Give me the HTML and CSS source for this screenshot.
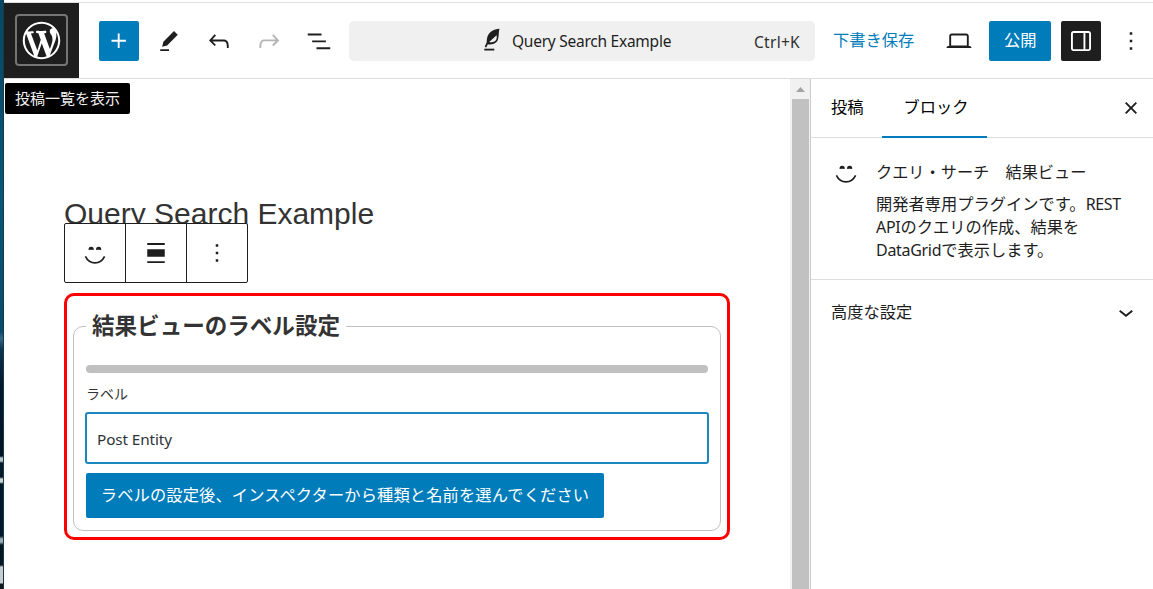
FILE: index.html
```html
<!DOCTYPE html>
<html lang="ja">
<head>
<meta charset="utf-8">
<title>Query Search Example</title>
<link rel="stylesheet" href="styles.css">
</head>
<body>
<div class="desktop"></div>
<div class="editor">
  <header class="header">
    <div class="site-hub">
      <div class="site-hub-frame"><svg class="wp-logo" viewBox="-2 -2 24 24"><path d="M20 10c0-5.51-4.49-10-10-10C4.48 0 0 4.49 0 10c0 5.52 4.48 10 10 10 5.51 0 10-4.48 10-10zM7.78 15.37L4.37 6.22c.55-.02 1.17-.08 1.17-.08.5-.06.44-1.13-.06-1.11 0 0-1.45.11-2.37.11-.18 0-.37 0-.58-.01C4.12 2.69 6.87 1.11 10 1.11c2.33 0 4.45.87 6.05 2.34-.68-.11-1.65.39-1.65 1.58 0 .74.45 1.36.9 2.1.35.61.55 1.36.55 2.46 0 1.49-1.4 5-1.4 5l-3.03-8.37c.54-.02.82-.17.82-.17.5-.05.44-1.25-.06-1.22 0 0-1.44.12-2.38.12-.87 0-2.33-.12-2.33-.12-.5-.03-.56 1.2-.06 1.22l.92.08 1.26 3.41zM17.41 10c.24-.64.74-1.87.43-4.25.7 1.29 1.05 2.71 1.05 4.25 0 3.29-1.73 6.24-4.4 7.78.97-2.59 1.94-5.2 2.92-7.78zM6.1 18.09C3.12 16.65 1.11 13.53 1.11 10c0-1.3.23-2.48.72-3.59C3.25 10.3 4.67 14.2 6.1 18.09zm4.03-6.63l2.58 6.98c-.86.29-1.76.45-2.71.45-.79 0-1.57-.11-2.29-.33.81-2.38 1.62-4.74 2.42-7.1z"/></svg></div>
      <div class="tooltip">投稿一覧を表示</div>
    </div>
    <div class="tools">
      <button class="tool tool-primary"><svg class="icon" viewBox="0 0 24 24"><path d="M11 12.5V17.5H12.5V12.5H17.5V11H12.5V6H11V11H6V12.5H11Z"/></svg></button>
      <button class="tool"><svg class="icon" viewBox="0 0 24 24"><path d="m19 7-3-3-8.5 8.5-1 4 4-1L19 7Zm-7 11.5H5V20h7v-1.5Z"/></svg></button>
      <button class="tool"><svg class="icon" viewBox="0 0 24 24"><path d="M18.3 11.7c-.6-.6-1.4-.9-2.3-.9H6.7l2.9-3.3-1.1-1-4.5 5L8.5 16l1-1-2.7-2.7H16c.5 0 .9.2 1.3.5 1 1 1 3.4 1 4.5v.3h1.5v-.2c0-1.5 0-4.3-1.5-5.7z"/></svg></button>
      <button class="tool tool-disabled"><svg class="icon" viewBox="0 0 24 24"><path d="M15.6 6.5l-1.1 1 2.9 3.3H8c-.9 0-1.7.3-2.3.9-1.4 1.5-1.4 4.2-1.4 5.6v.2h1.5v-.3c0-1.1 0-3.5 1-4.5.3-.3.7-.5 1.3-.5h9.2L14.5 15l1.1 1.1 4.6-4.6-4.6-5z"/></svg></button>
      <button class="tool"><svg class="icon" viewBox="0 0 24 24"><path d="M3 6h11v1.5H3V6Zm3.5 5.5h11V13h-11v-1.5ZM21 17H10v1.5h11V17Z"/></svg></button>
    </div>
    <div class="command-bar">
      <svg class="feather" viewBox="0 0 16 24"><path d="M15.5.8C9.500 1 4.500 4.500 3.200 9.500 2.700 11.500 2.900 13.200 2.600 14.500L.7 18.800l1.500.7 1.700-3.300C7 16.800 11 16 13 13.500 15.300 10.500 14.200 5.500 15.500.8ZM5.200 14 12.600 7.200C13 9.500 12.700 11.400 11.400 12.700 10 14 7.400 14.500 5.200 14Z"/><path d="M.3 20.700h10v1.800H.3z"/></svg>
      <span class="command-title">Query Search Example</span>
      <span class="command-key">Ctrl+K</span>
    </div>
    <div class="actions">
      <span class="save-draft">下書き保存</span>
      <button class="tool preview"><svg class="icon" viewBox="0 0 24 24"><path d="M20.500 16h-.7V8c0-1.100-.9-2-2-2H6.200c-1.100 0-2 .9-2 2v8h-.7c-.8 0-1.500.7-1.500 1.500h20c0-.8-.7-1.500-1.500-1.500zM5.700 8c0-.3.2-.5.5-.5h11.600c.3 0 .5.2.5.5v7.600H5.700V8z"/></svg></button>
      <button class="publish">公開</button>
      <button class="tool tool-dark"><svg class="icon" viewBox="0 0 24 24"><path d="M18 4H6c-1.100 0-2 .9-2 2v12c0 1.100.9 2 2 2h12c1.100 0 2-.9 2-2V6c0-1.100-.9-2-2-2zm-4 14.500H6c-.3 0-.5-.2-.5-.5V6c0-.3.2-.5.5-.5h8v13zm4.500-.5c0 .3-.2.5-.5.5h-2.500v-13H18c.3 0 .5.2.5.5v12z"/></svg></button>
      <button class="tool"><svg class="icon" viewBox="0 0 24 24"><path d="M13 19h-2v-2h2v2zm0-6h-2v-2h2v2zm0-6h-2V5h2v2z"/></svg></button>
    </div>
  </header>
  <div class="body">
    <main class="canvas">
      <h1 class="post-title">Query Search Example</h1>
      <div class="block-toolbar">
        <button class="block-tool"><svg class="smiley" viewBox="0 0 22 20"><path d="M4.600 6C4.300 3.900 5.400 2.700 7.200 2.700S10 3.900 9.700 6Q7.200 5.500 4.600 6ZM12.100 6C11.800 3.900 12.900 2.700 14.700 2.700S17.500 3.900 17.200 6Q14.700 5.500 12.100 6Z"/><path class="smile" d="M1.400 12.400C3.500 16.800 7 18.900 11 18.900s7.500-2.100 9.600-6.500"/></svg></button>
        <button class="block-tool"><svg class="icon" viewBox="0 0 24 24"><path d="M19 5.500H5V4h14v1.500ZM19 20H5v-1.500h14V20ZM5 9h14v6H5V9Z"/></svg></button>
        <button class="block-tool"><svg class="icon" viewBox="0 0 24 24"><path d="M13 19h-2v-2h2v2zm0-6h-2v-2h2v2zm0-6h-2V5h2v2z"/></svg></button>
      </div>
      <section class="block">
        <fieldset class="settings">
          <legend class="settings-title"><span class="settings-title-text">結果ビューのラベル設定</span></legend>
          <div class="divider"></div>
          <label class="field-label" for="entity">ラベル</label>
          <input class="field-input" id="entity" type="text" value="Post Entity">
          <button class="hint">ラベルの設定後、インスペクターから種類と名前を選んでください</button>
        </fieldset>
      </section>
    </main>
    <div class="scrollbar"><svg class="scroll-arrow" viewBox="0 0 9 5"><path d="M0 5 4.500 0 9 5Z"/></svg><div class="scroll-thumb"></div></div>
    <aside class="sidebar">
      <nav class="tabs">
        <span class="tab">投稿</span>
        <span class="tab tab-active">ブロック</span>
        <svg class="icon close" viewBox="0 0 24 24"><path d="M12 13.060l3.712 3.713 1.061-1.060L13.061 12l3.712-3.712-1.060-1.060L12 10.938 8.288 7.227l-1.061 1.060L10.939 12l-3.712 3.712 1.060 1.061L12 13.061z"/></svg>
      </nav>
      <div class="card">
        <svg class="smiley" viewBox="0 0 22 20"><path d="M4.600 6C4.300 3.900 5.400 2.700 7.200 2.700S10 3.900 9.700 6Q7.200 5.500 4.600 6ZM12.100 6C11.800 3.900 12.900 2.700 14.700 2.700S17.500 3.900 17.200 6Q14.700 5.500 12.100 6Z"/><path class="smile" d="M1.400 12.400C3.500 16.800 7 18.900 11 18.900s7.500-2.100 9.600-6.500"/></svg>
        <div class="card-text">
          <h2 class="card-title">クエリ・サーチ　結果ビュー</h2>
          <p class="card-desc">開発者専用プラグインです。<span class="latin">REST</span><br><span class="latin">API</span>のクエリの作成、結果を<br><span class="latin">DataGrid</span>で表示します。</p>
        </div>
      </div>
      <div class="panel">
        <span class="panel-title">高度な設定</span>
        <svg class="icon panel-chevron" viewBox="0 0 24 24"><path d="M17.500 11.600L12 16l-5.500-4.400.9-1.200L12 14l4.500-3.600 1 1.200z"/></svg>
      </div>
    </aside>
  </div>
</div>
</body>
</html>
```

FILE: styles.css
```css
* { box-sizing: border-box; }

body {
  margin: 0;
  width: 1153px;
  height: 589px;
  display: flex;
  overflow: hidden;
  background: #fff;
  color: #1e1e1e;
  font: 16.25px/22px "Noto Sans CJK JP", sans-serif;
}

button {
  margin: 0;
  padding: 0;
  border: 0;
  background: none;
  color: inherit;
  font: inherit;
}

svg { display: block; fill: currentColor; flex: none; }

.icon { width: 30px; height: 30px; }

.desktop {
  flex: none;
  width: 4px;
  border-right: 1px solid #173a4a;
  background: linear-gradient(#074763 0, #07567a 200px, #084b6b 332px, #336783 338px, #0b3350 350px, #04182c 385px, #031225 456px, #b8c4ca 458px 461px, #061a2c 463px 477px, #c9d4d8 479px 482px, #04162a 484px 536px, #9eacb8 539px 542px, #071422 545px 565px, #c9cccf 567px 583px, #14181b 584px);
}

.editor {
  flex: 1;
  min-width: 0;
  display: flex;
  flex-direction: column;
  padding-top: 2px;
}

/* Header */
.header {
  flex: none;
  height: 77px;
  display: flex;
  align-items: center;
  border-top: 1px solid #ddd;
  border-bottom: 1px solid #ddd;
}

.site-hub {
  position: relative;
  width: 75px;
  height: 75px;
  padding: 11px;
  background: #1e1e1e;
}

.site-hub-frame {
  width: 53px;
  height: 52px;
  display: flex;
  align-items: center;
  justify-content: center;
  border: 2px solid #757575;
  border-radius: 4px;
  color: #fff;
}

.wp-logo { width: 45px; height: 45px; }

.tooltip {
  position: absolute;
  z-index: 2;
  left: 1px;
  top: 80px;
  width: 125px;
  height: 31px;
  padding-left: 10px;
  border-radius: 2px;
  background: #000;
  color: #f0f0f0;
  font-size: 15px;
  line-height: 29px;
  white-space: nowrap;
}

.tools { display: flex; gap: 10px; margin-left: 20px; }

.tool {
  width: 40px;
  height: 40px;
  display: flex;
  align-items: center;
  justify-content: center;
  border-radius: 2px;
}

.tool-primary { background: #007cba; color: #fff; }
.tool-disabled { color: #b5b5b5; }
.tool-dark { background: #1e1e1e; color: #fff; }

.command-bar {
  width: 466px;
  height: 40px;
  margin-left: 10px;
  padding: 0 15px 0 135px;
  display: flex;
  align-items: center;
  border-radius: 5px;
  background: #f0f0f0;
  font-family: "Noto Sans", sans-serif;
  font-size: 15.5px;
  letter-spacing: -0.25px;
}

.feather { width: 16px; height: 24px; margin-top: -2px; }
.command-title { margin-left: 12px; white-space: nowrap; }
.command-key { margin: 2px 0 0 auto; color: #2f2f2f; font-size: 15.5px; letter-spacing: 0.3px; }

.actions { flex: 1; display: flex; align-items: center; margin-left: 18px; }
.save-draft { margin-top: -4px; color: #007cba; white-space: nowrap; }
.preview { margin: 0 10px 0 25px; }

.publish {
  width: 62px;
  height: 40px;
  margin-right: 10px;
  padding-bottom: 3px;
  border-radius: 2px;
  background: #007cba;
  color: #fff;
}

.actions .tool:last-child { margin-left: 10px; }

/* Canvas */
.body { flex: 1; min-height: 0; display: flex; }

.canvas { width: 786px; padding: 117px 60px 0; }

.post-title {
  height: 27px;
  margin: 0;
  color: #333;
  font: 400 30px/36px "Liberation Sans", Arial, sans-serif;
  white-space: nowrap;
}

.block-toolbar {
  position: relative;
  width: 184px;
  height: 60px;
  display: flex;
  border: 1px solid #1e1e1e;
  border-radius: 2px;
  background: #fff;
}

.block-tool {
  flex: 1;
  display: flex;
  align-items: center;
  justify-content: center;
}

.block-tool + .block-tool { border-left: 1px solid #1e1e1e; }

.smiley { width: 22px; height: 20px; }
.block-tool .smiley { margin-top: 2px; }
.smile { fill: none; stroke: currentColor; stroke-width: 1.7; }

.block {
  width: 666px;
  height: 247px;
  margin-top: 10px;
  padding: 15px 6px 6px;
  border: 3px solid #f00;
  border-radius: 10px;
}

.settings {
  width: 648px;
  min-width: 0;
  height: 220px;
  margin: 0;
  padding: 0 12px;
  border: 1px solid silver;
  border-radius: 10px;
}

.settings-title {
  height: 30px;
  padding: 0 6px;
  color: #333;
  font-size: 22.55px;
  font-weight: 700;
  line-height: 26px;
}

.settings-title-text { display: block; height: 26px; }

.divider { height: 8px; margin-top: 24px; border-radius: 4px; background: silver; }

.field-label {
  display: block;
  margin-top: 9px;
  color: #333;
  font-size: 14px;
  line-height: 22px;
}

.field-input {
  display: block;
  width: 624px;
  height: 52px;
  margin: 8px 0 0 -1px;
  padding: 2px 10px 0;
  border: 2px solid #1c86bf;
  border-radius: 3px;
  outline: none;
  color: #2c3338;
  font: 15.3px "Noto Sans", sans-serif;
  letter-spacing: -0.1px;
}

.hint {
  width: 518px;
  height: 45px;
  margin-top: 9px;
  padding-bottom: 3px;
  border-radius: 2px;
  background: #007cba;
  color: #fff;
  letter-spacing: 0.13px;
  white-space: nowrap;
}

/* Scrollbar */
.scrollbar {
  width: 20px;
  padding: 8px 1px 0 2px;
  display: flex;
  flex-direction: column;
  align-items: center;
  background: #f1f1f1;
}

.scroll-arrow { width: 9px; height: 5px; color: #a3a3a3; }
.scroll-thumb { width: 17px; flex: 1; margin-top: 7px; background: #c1c1c1; }

/* Sidebar */
.sidebar { flex: 1; border-left: 1px solid #ccc; }

.tabs {
  height: 59px;
  display: flex;
  align-items: stretch;
  border-bottom: 1px solid #ddd;
}

.tab { padding: 16px 18px 0 20px; color: #000; }
.tab-active { width: 105px; margin-bottom: -1px; padding-left: 22px; padding-right: 0; border-bottom: 2px solid #007cba; }
.close { margin: 14px 7px 0 auto; }

.card {
  height: 142px;
  display: flex;
  padding: 23px 20px 0 24px;
  border-bottom: 1px solid #ddd;
}

.card .smiley { margin-top: 2px; }
.card-text { margin-left: 19px; white-space: nowrap; }

.card-title {
  margin: 0 0 11px;
  font-size: 16.2px;
  font-weight: 400;
  line-height: 20px;
}

.card-desc { margin: 0; line-height: 22.75px; }
.latin { font-family: "Noto Sans", sans-serif; font-size: 16px; line-height: 1; letter-spacing: -0.3px; }

.panel {
  height: 65px;
  display: flex;
  align-items: center;
  justify-content: space-between;
  padding: 0 12px 0 20px;
}

.panel-title { margin-top: -4px; }
.panel-chevron { margin-top: -2px; }
```
